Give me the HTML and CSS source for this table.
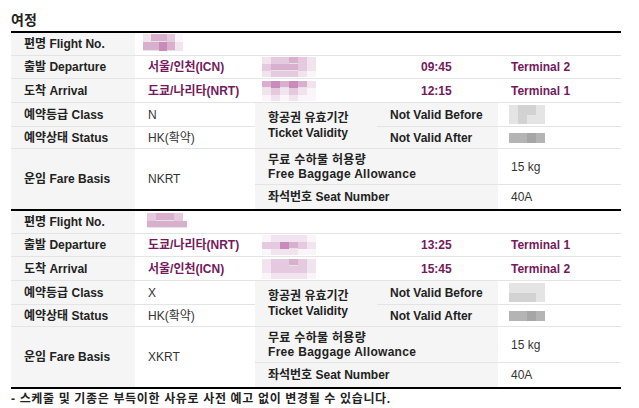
FILE: index.html
```html
<!DOCTYPE html>
<html lang="ko">
<head>
<meta charset="utf-8">
<title>여정</title>
<link rel="stylesheet" href="styles.css">
</head>
<body>
<div class="page">
  <h2 class="title">여정</h2>

  <div class="seg">
    <div class="c lab">편명 Flight No.</div>
    <div class="c val span4"><div class="mz mz-flight"><i class="a"></i><i class="c"></i><i class="c"></i><i class="b"></i><i class="e"></i><i class="c"></i><i class="c"></i><i class="d"></i><i class="c"></i><i class="a"></i></div></div>

    <div class="c lab">출발 Departure</div>
    <div class="c val city">서울/인천(ICN)</div>
    <div class="c val"><div class="mz mz-date"><i class="a"></i><i class="b"></i><i class="b"></i><i class="c"></i><i class="b"></i><i class="a"></i><i class="b"></i><i class="c"></i><i class="c"></i><i class="c"></i><i class="b"></i><i class="a"></i><i class="a"></i><i class="b"></i><i class="b"></i><i class="b"></i><i class="a"></i><i class="e"></i></div></div>
    <div class="c val time">09:45</div>
    <div class="c val term">Terminal 2</div>

    <div class="c lab">도착 Arrival</div>
    <div class="c val city">도쿄/나리타(NRT)</div>
    <div class="c val"><div class="mz mz-date"><i class="c"></i><i class="d"></i><i class="c"></i><i class="d"></i><i class="c"></i><i class="a"></i><i class="a"></i><i class="b"></i><i class="a"></i><i class="b"></i><i class="a"></i><i class="e"></i><i class="e"></i><i class="a"></i><i class="e"></i><i class="a"></i><i class="e"></i><i class="e"></i></div></div>
    <div class="c val time">12:15</div>
    <div class="c val term">Terminal 1</div>

    <div class="c lab">예약등급 Class</div>
    <div class="c val">N</div>
    <div class="c lab vlab"><span>항공권 유효기간<br>Ticket Validity</span></div>
    <div class="c lab nv">Not Valid Before</div>
    <div class="c val"><div class="mz mz-gray"><i class="g1"></i><i class="g2"></i><i class="g2"></i><i class="g1"></i><i class="g1"></i><i class="g2"></i><i class="g1"></i><i class="g1"></i></div></div>

    <div class="c lab">예약상태 Status</div>
    <div class="c val">HK(확약)</div>
    <div class="c lab nv">Not Valid After</div>
    <div class="c val"><div class="mz mz-gray2"><i class="g3"></i><i class="g3"></i><i class="g4"></i><i class="g3"></i></div></div>

    <div class="c lab fare">운임 Fare Basis</div>
    <div class="c val fare">NKRT</div>
    <div class="c lab bag"><span>무료 수하물 허용량<br>Free Baggage Allowance</span></div>
    <div class="c val">15 kg</div>
    <div class="c lab seat last">좌석번호 Seat Number</div>
    <div class="c val last">40A</div>
  </div>

  <div class="seg">
    <div class="c lab">편명 Flight No.</div>
    <div class="c val span4"><div class="mz mz-flight2"><i class="b"></i><i class="c"></i><i class="c"></i><i class="b"></i><i class="c"></i><i class="c"></i><i class="c"></i><i class="c"></i></div></div>

    <div class="c lab">출발 Departure</div>
    <div class="c val city">도쿄/나리타(NRT)</div>
    <div class="c val"><div class="mz mz-date"><i class="e"></i><i class="a"></i><i class="a"></i><i class="a"></i><i class="a"></i><i class="e"></i><i class="b"></i><i class="b"></i><i class="d"></i><i class="c"></i><i class="b"></i><i class="a"></i><i class="e"></i><i class="a"></i><i class="a"></i><i class="a"></i><i class="e"></i><i class="e"></i></div></div>
    <div class="c val time">13:25</div>
    <div class="c val term">Terminal 1</div>

    <div class="c lab">도착 Arrival</div>
    <div class="c val city">서울/인천(ICN)</div>
    <div class="c val"><div class="mz mz-date"><i class="a"></i><i class="b"></i><i class="b"></i><i class="c"></i><i class="b"></i><i class="a"></i><i class="a"></i><i class="b"></i><i class="b"></i><i class="b"></i><i class="b"></i><i class="a"></i><i class="e"></i><i class="a"></i><i class="a"></i><i class="a"></i><i class="a"></i><i class="e"></i></div></div>
    <div class="c val time">15:45</div>
    <div class="c val term">Terminal 2</div>

    <div class="c lab">예약등급 Class</div>
    <div class="c val">X</div>
    <div class="c lab vlab"><span>항공권 유효기간<br>Ticket Validity</span></div>
    <div class="c lab nv">Not Valid Before</div>
    <div class="c val"><div class="mz mz-gray"><i class="g1"></i><i class="g1"></i><i class="g1"></i><i class="g1"></i><i class="g2"></i><i class="g2"></i><i class="g2"></i><i class="g1"></i></div></div>

    <div class="c lab">예약상태 Status</div>
    <div class="c val">HK(확약)</div>
    <div class="c lab nv">Not Valid After</div>
    <div class="c val"><div class="mz mz-gray2"><i class="g3"></i><i class="g3"></i><i class="g4"></i><i class="g3"></i></div></div>

    <div class="c lab fare">운임 Fare Basis</div>
    <div class="c val fare">XKRT</div>
    <div class="c lab bag"><span>무료 수하물 허용량<br>Free Baggage Allowance</span></div>
    <div class="c val">15 kg</div>
    <div class="c lab seat last">좌석번호 Seat Number</div>
    <div class="c val last">40A</div>
  </div>

  <p class="note">- 스케줄 및 기종은 부득이한 사유로 사전 예고 없이 변경될 수 있습니다.</p>
</div>
</body>
</html>
```

FILE: styles.css
```css
html, body {
  margin: 0;
  padding: 0;
  background: #fff;
}
body {
  font-family: "Liberation Sans", "Noto Sans CJK KR", sans-serif;
  font-size: 12px;
  color: #222;
}
.page {
  padding-left: 11px;
  width: 610px;
}
.title {
  margin: 0;
  height: 31px;
  box-sizing: border-box;
  padding-top: 6px;
  display: flex;
  align-items: center;
  font-size: 14px;
  font-weight: 700;
  color: #222;
}
.seg {
  display: grid;
  grid-template-columns: 124px 120px 122px 121px 123px;
  grid-template-rows: 23px 23px 24px 24px 22px 36px 24px;
  border-top: 2px solid #000;
}
.seg:last-of-type {
  border-bottom: 2px solid #000;
}
.c {
  box-sizing: border-box;
  border-bottom: 1px solid #e4e4e4;
  display: flex;
  align-items: center;
  padding-left: 13px;
  line-height: 14px;
  white-space: nowrap;
}
.c.last {
  border-bottom: 0;
}
.lab {
  background: #f5f5f5;
  font-weight: 700;
  color: #222;
}
.val {
  background: #fff;
  color: #333;
}
.span4 {
  grid-column: 2 / span 4;
  padding-left: 8px;
}
.city {
  color: #741a5c;
  font-weight: 700;
}
.time {
  color: #741a5c;
  font-weight: 700;
  padding-left: 44px;
}
.term {
  color: #741a5c;
  font-weight: 700;
}
.vlab {
  grid-row: span 2;
  line-height: 15px;
}
.nv {
  padding-left: 13px;
}
.fare {
  grid-row: span 2;
  border-bottom: 0;
}
.bag {
  grid-column: 3 / span 2;
  line-height: 14px;
  letter-spacing: 0.3px;
}
.seat {
  grid-column: 3 / span 2;
}
.note {
  margin: 0;
  line-height: 20px;
  font-weight: 700;
  color: #222;
  letter-spacing: 0.65px;
}

/* mosaic placeholders for masked values */
.mz {
  display: grid;
}
.mz i {
  display: block;
}
.mz-flight {
  grid-template-columns: repeat(5, 8px);
  grid-template-rows: 8px 9px;
  margin-top: -3px;
}
.mz-flight2 {
  grid-template-columns: repeat(4, 9px);
  grid-template-rows: 8px 7px;
  margin-left: 4px;
  margin-top: -3px;
}
.mz-date {
  grid-template-columns: repeat(6, 9px);
  grid-template-rows: 7px 7px 6px;
  margin-left: -6px;
}
.mz-gray {
  grid-template-columns: repeat(4, 9px);
  grid-template-rows: 10px 9px;
  margin-left: -2px;
}
.mz-gray2 {
  grid-template-columns: repeat(4, 9px);
  grid-template-rows: 10px;
  margin-left: -2px;
}
.mz .a { background: #f2e4ee; }
.mz .b { background: #e5c9de; }
.mz .c { background: #d8afcd; }
.mz .d { background: #c98bb9; }
.mz .e { background: #faf5f8; }
.mz .g1 { background: #e4e4e4; }
.mz .g2 { background: #d2d2d2; }
.mz .g3 { background: #b4b4b4; }
.mz .g4 { background: #a6a6a6; }
```
